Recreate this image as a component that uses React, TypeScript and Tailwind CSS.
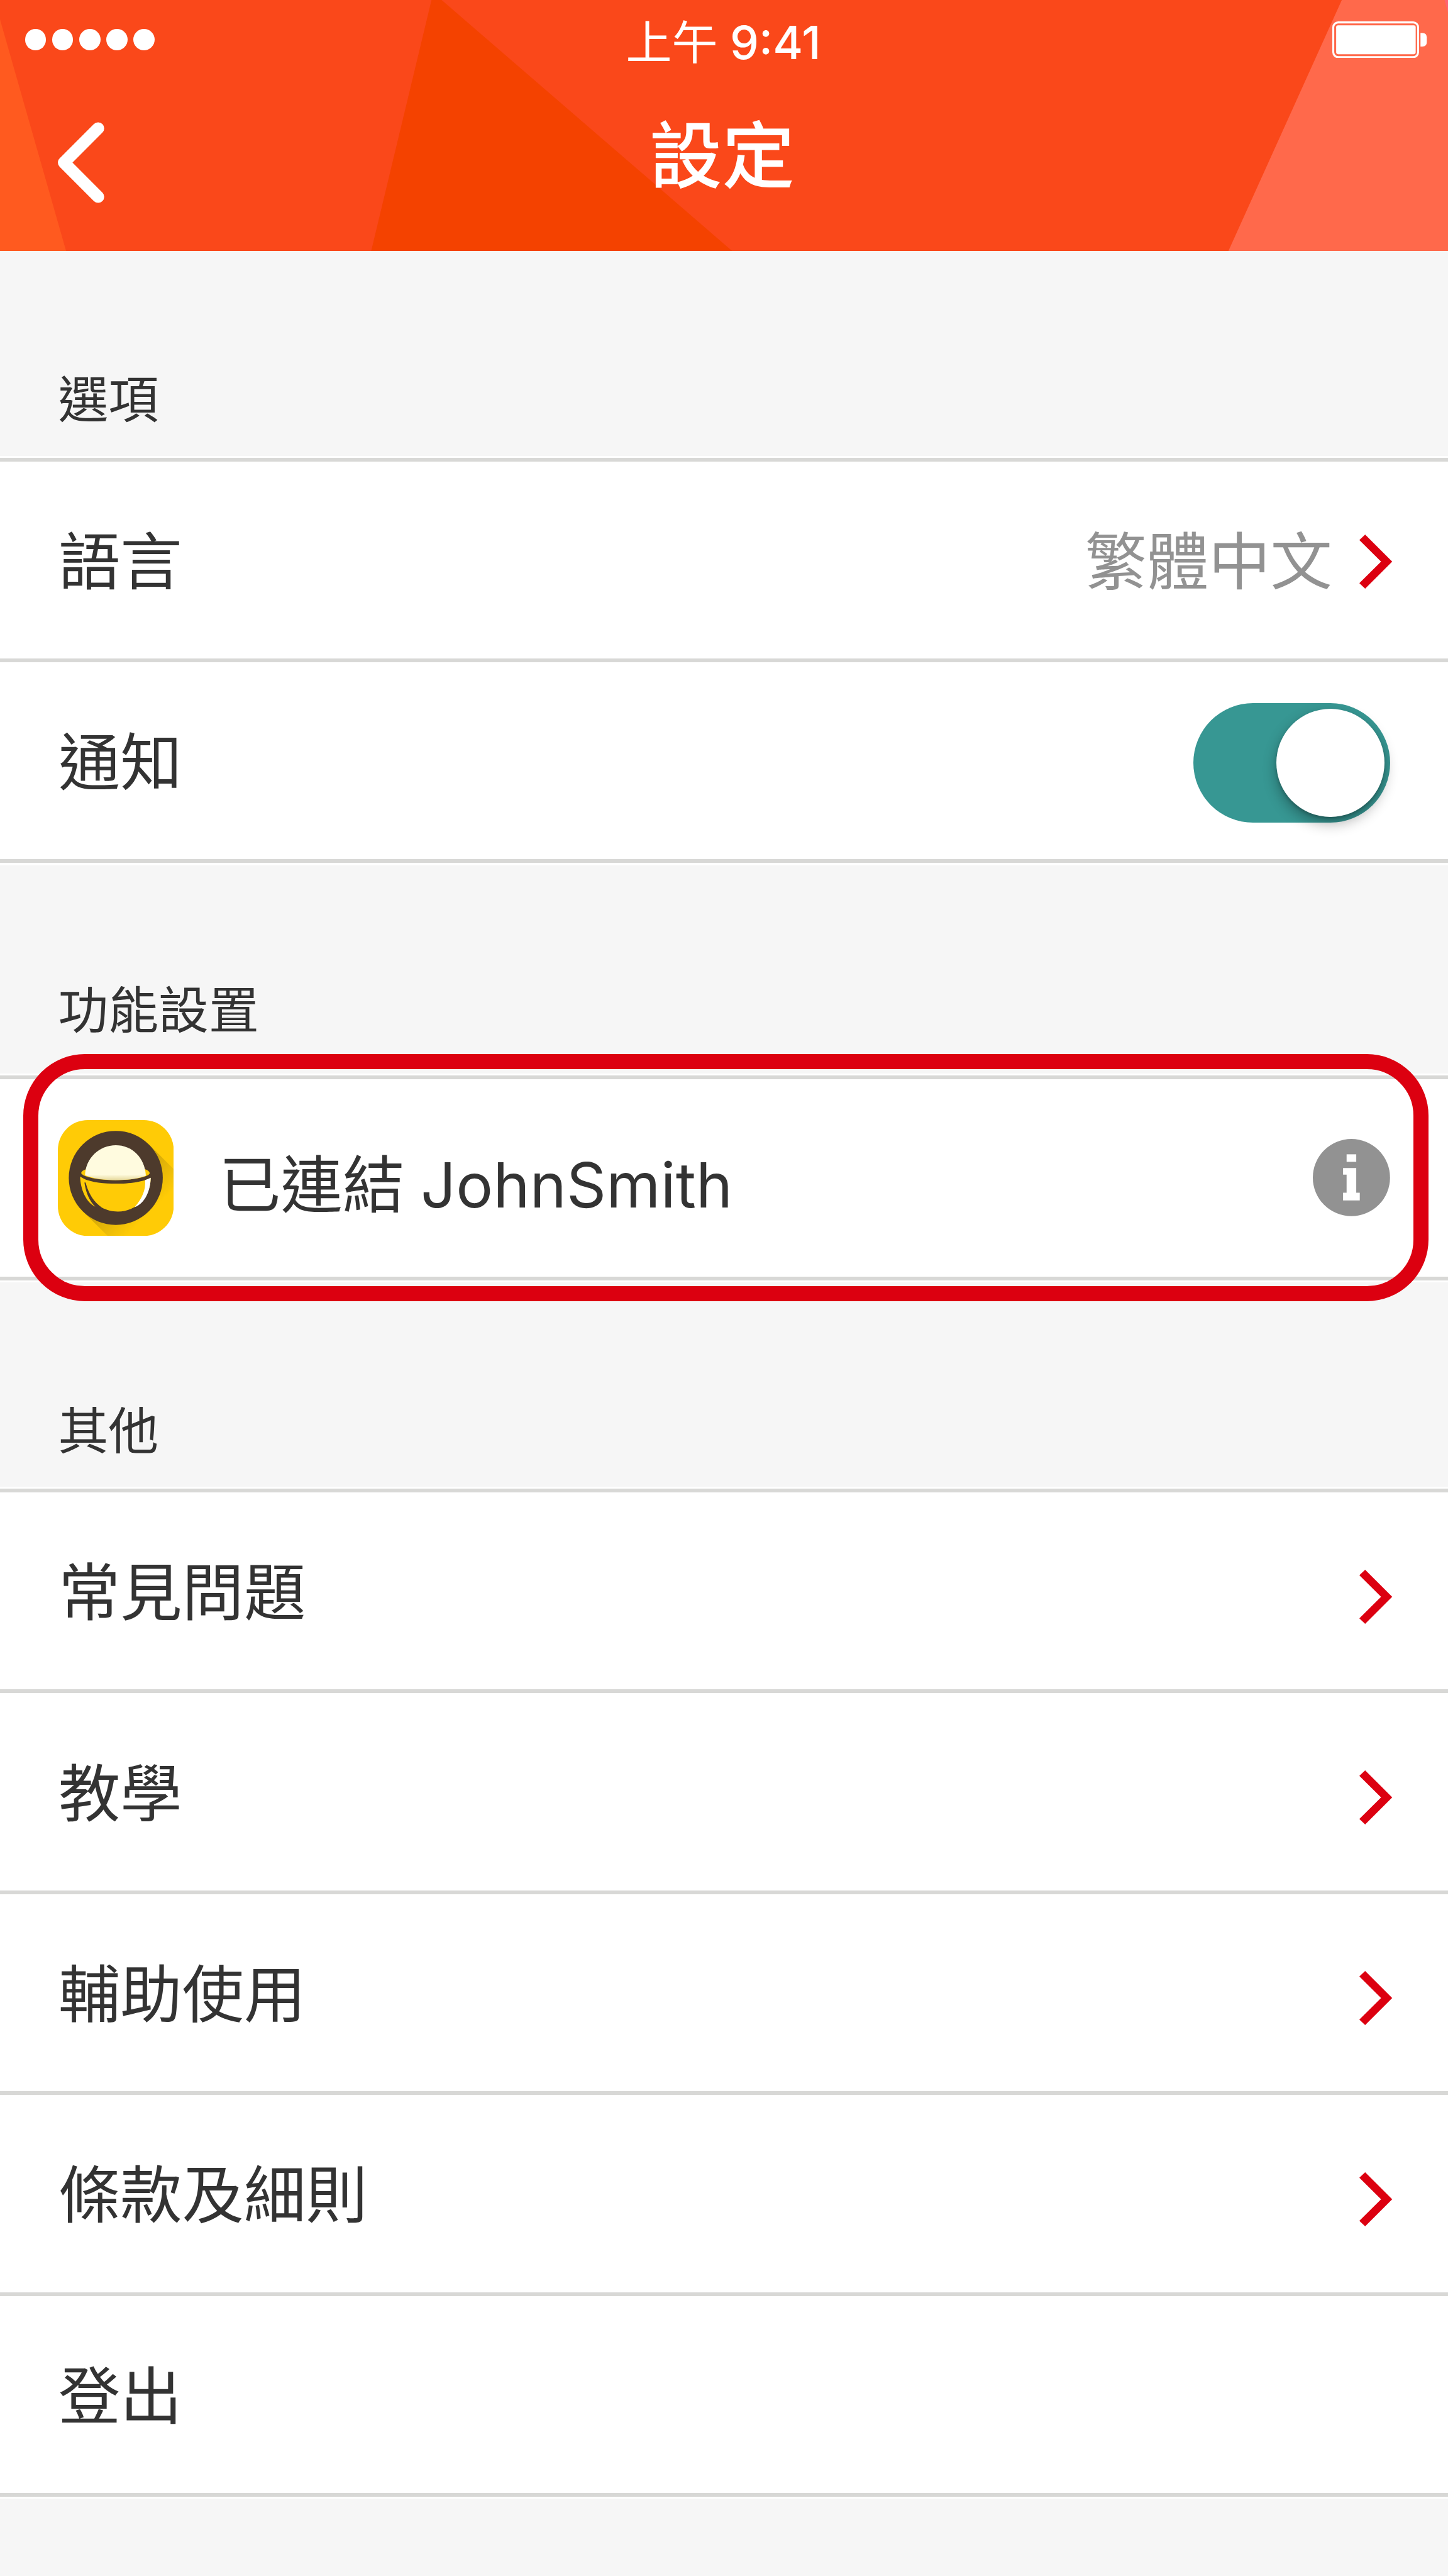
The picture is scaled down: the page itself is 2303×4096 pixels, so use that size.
import type { ReactNode } from "react";

const FONT = "font-[Inter,'Noto_Sans_CJK_TC',sans-serif]";

function Han({ children }: { children: ReactNode }) {
  return (
    <span lang="zh-Hant" className="font-['Noto_Sans_CJK_TC',sans-serif] font-normal">
      {children}
    </span>
  );
}

function HeaderBackdrop() {
  return (
    <svg className="absolute inset-0 h-full w-full" viewBox="0 0 3000 520" preserveAspectRatio="none" aria-hidden="true">
      <rect width="3000" height="520" fill="#fa481a" />
      <polygon points="0,40 137,520 0,520" fill="#ff5a1f" />
      <polygon points="894,0 915,0 1517,520 769,520" fill="#f44200" />
      <polygon points="2780,0 3000,0 3000,520 2545,520" fill="#ff694b" />
      <polygon points="2993,0 3000,0 3000,26" fill="#ff6470" />
    </svg>
  );
}

function SignalDots() {
  return (
    <div className="flex gap-[9.3px]">
      {[0, 1, 2, 3, 4].map((i) => (
        <span key={i} className="size-[33.8px] rounded-full bg-white" />
      ))}
    </div>
  );
}

function Battery() {
  return (
    <svg className="h-[58.4px] w-[151px]" viewBox="0 0 197 76" aria-label="battery">
      <rect x="2" y="2" width="176" height="72" rx="10" fill="none" stroke="#fff" strokeWidth="4" />
      <rect x="8" y="8" width="165" height="60" rx="4" fill="#fff" />
      <path d="M183 24h4q9 0 9 9v10q0 9-9 9h-4z" fill="#fff" />
    </svg>
  );
}

function BackChevron() {
  return (
    <svg className="h-[129px] w-[74px]" viewBox="0 0 97 168" fill="none" aria-label="back">
      <path d="M84 12.6 12.7 84 84 155.4" stroke="#fff" strokeWidth="25.3" strokeLinecap="round" strokeLinejoin="round" />
    </svg>
  );
}

function Chevron() {
  return (
    <svg className="-mr-[3px] h-[86px] w-[52.2px]" viewBox="0 0 68 112" aria-hidden="true">
      <polygon points="12,0 68,56 12,112 0,100.5 45,56 0,11.5" fill="#dc0010" />
    </svg>
  );
}

function Toggle() {
  return (
    <div className="flex h-[190.4px] w-[313.2px] justify-end rounded-full bg-[#379793] p-[9px]">
      <div className="size-[172.4px] rounded-full bg-white shadow-[0_10px_22px_rgba(0,0,0,0.32),0_3px_5px_rgba(0,0,0,0.2)]" />
    </div>
  );
}

function AppIcon() {
  return (
    <svg className="size-[184.3px]" viewBox="15 15 720 720" aria-hidden="true">
      <defs>
        <clipPath id="tile">
          <rect x="15" y="15" width="720" height="720" rx="186" />
        </clipPath>
        <linearGradient id="cast" gradientUnits="userSpaceOnUse" x1="375" y1="375" x2="590" y2="590">
          <stop offset="0" stopColor="#7a6010" stopOpacity="0.42" />
          <stop offset="1" stopColor="#7a6010" stopOpacity="0" />
        </linearGradient>
        <linearGradient id="cream" x1="0" y1="0" x2="0" y2="1">
          <stop offset="0.84" stopColor="#fffbdf" />
          <stop offset="1" stopColor="#e6d99c" />
        </linearGradient>
      </defs>
      <g clipPath="url(#tile)">
        <rect x="15" y="15" width="720" height="720" fill="#ffcb06" />
        <polygon points="583,168 735,320 735,735 325,735 168,580" fill="url(#cast)" />
        <circle cx="375" cy="374" r="292" fill="#4d3a2c" />
        <path d="M160 343Q163 330 190 321H558Q583 330 586 345C580 368 480 388 373 388S165 368 160 343Z" fill="#ffcb06" />
        <path d="M184 358C186 250 275 171 375 171S555 245 562 361C510 382 440 388 373 388S240 380 184 358Z" fill="url(#cream)" />
        <path d="M177 380C230 402 300 410 378 410S550 398 592 373C592 490 505 583 388 583C350 583 315 573 288 558C240 527 205 470 189 408Q186 400 180 403Z" fill="#ffcb06" />
        <path d="M153 366L182 382L181 408C190 470 214 522 248 553C190 525 157 450 153 366Z" fill="#ffcb06" />
        <path d="M592 373C590 450 560 530 492 556C540 500 562 450 557 388Z" fill="#fff" />
      </g>
    </svg>
  );
}

function InfoIcon() {
  return (
    <svg className="size-[122.8px]" viewBox="0 0 160 160" aria-label="info">
      <circle cx="80" cy="80" r="80" fill="#929292" />
      <rect x="70" y="31.8" width="20" height="15.6" fill="#fff" />
      <path d="M62.7 60.4H90V111.5H97.3V127.5H62.7V111.5H70V74H62.7Z" fill="#fff" />
    </svg>
  );
}

function SectionTitle({ children, tall }: { children: string; tall?: boolean }) {
  return (
    <h2
      className={
        tall
          ? "flex h-[331.6px] items-end px-[92.5px] pb-[52px] text-[79.8px] leading-[110px]"
          : "flex h-[325.5px] items-end px-[92.5px] pb-[40.5px] text-[79.8px] leading-[110px]"
      }
    >
      <Han>{children}</Han>
    </h2>
  );
}

function Group({ children }: { children: ReactNode }) {
  return (
    <div className="bg-white py-[3.07px]">
      <div className="border-b-[6.14px] border-[#d8d8d6]">{children}</div>
    </div>
  );
}

function Row({ children }: { children: ReactNode }) {
  return (
    <div className="flex h-[319.35px] items-center justify-between border-t-[6.14px] border-[#d8d8d6] px-[92px] text-[98.3px] leading-[140px]">
      {children}
    </div>
  );
}

function RowLabel({ children }: { children: string }) {
  return (
    <div className="-mt-px ml-px">
      <Han>{children}</Han>
    </div>
  );
}

export default function App() {
  const links = ["常見問題", "教學", "輔助使用", "條款及細則"];
  return (
    <div className={`h-[4096px] w-[2303px] overflow-hidden bg-[#f6f6f6] text-[#333] ${FONT}`}>
      <header className="relative h-[399.2px] text-white">
        <HeaderBackdrop />
        <div className="relative">
          <div className="grid h-[126px] grid-cols-[1fr_auto_1fr] items-center pr-[33.5px] pl-[39.6px]">
            <SignalDots />
            <div className="mt-[4px] -ml-[8px] text-[73px] leading-[100px] font-medium">
              <Han>上午</Han> 9:41
            </div>
            <div className="flex justify-end">
              <Battery />
            </div>
          </div>
          <div className="grid h-[264px] grid-cols-[1fr_auto_1fr] items-center px-[92px]">
            <BackChevron />
            <h1 className="-mt-[20px] -ml-[6px] text-[115.5px] leading-[160px] font-medium">設定</h1>
          </div>
        </div>
      </header>

      <SectionTitle>選項</SectionTitle>
      <Group>
        <Row>
          <RowLabel>語言</RowLabel>
          <div className="flex items-center gap-[43px]">
            <div className="text-[#929292]">
              <RowLabel>繁體中文</RowLabel>
            </div>
            <div className="mt-[6px]">
              <Chevron />
            </div>
          </div>
        </Row>
        <Row>
          <RowLabel>通知</RowLabel>
          <div className="mt-[6px]">
            <Toggle />
          </div>
        </Row>
      </Group>

      <SectionTitle tall>功能設置</SectionTitle>
      <div className="relative">
        <Group>
          <Row>
            <div className="flex items-center gap-[72px]">
              <AppIcon />
              <div className="mt-[16px]">
                <Han>已連結</Han>
                <span className="-ml-[2px] tracking-[0.2px]"> JohnSmith</span>
              </div>
            </div>
            <InfoIcon />
          </Row>
        </Group>
        <div className="absolute -top-[30.7px] right-[30.7px] -bottom-[30.7px] left-[36.85px] rounded-[98px] border-[24.6px] border-[#dc0010]" />
      </div>

      <SectionTitle>其他</SectionTitle>
      <Group>
        {links.map((label) => (
          <Row key={label}>
            <RowLabel>{label}</RowLabel>
            <div className="mt-[17.6px]">
              <Chevron />
            </div>
          </Row>
        ))}
        <Row>
          <RowLabel>登出</RowLabel>
        </Row>
      </Group>
    </div>
  );
}
